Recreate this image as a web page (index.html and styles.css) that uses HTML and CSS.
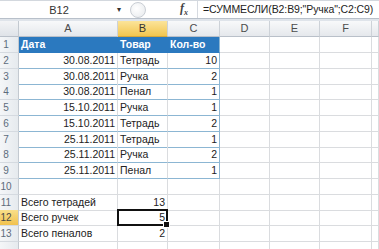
FILE: index.html
```html
<!DOCTYPE html>
<html>
<head>
   <meta http-equiv="Content-Type" content="text/html; charset=UTF-8" />
   <link rel="stylesheet" href="styles.css">
</head>
<body>

<div class="fbar">
    <div class="namebox">B12</div>
    <div class="drop">&#9662;</div>
    <div class="btnzone"><span class="round"></span></div>
    <div class="fx">f<sub>x</sub></div>
    <div class="formula">=СУММЕСЛИ(B2:B9;"Ручка";C2:C9)</div>
</div>
<div class="gap"></div>

<div class="sheet">
    <div class="row hdr">
        <div class="rh corner"></div>
        <div class="ch">A</div>
        <div class="ch sel">B</div>
        <div class="ch">C</div>
        <div class="ch">D</div>
        <div class="ch">E</div>
        <div class="ch">F</div>
        <div class="ch"></div>
    </div>

    <div class="row">
        <div class="rh">1</div>
        <div class="c th">Дата</div>
        <div class="c th">Товар</div>
        <div class="c th last">Кол-во</div>
        <div class="c"></div><div class="c"></div><div class="c"></div><div class="c"></div>
    </div>
    <div class="row">
        <div class="rh">2</div>
        <div class="c tb r">30.08.2011</div>
        <div class="c tb">Тетрадь</div>
        <div class="c tb r last">10</div>
        <div class="c"></div><div class="c"></div><div class="c"></div><div class="c"></div>
    </div>
    <div class="row">
        <div class="rh">3</div>
        <div class="c tb r">30.08.2011</div>
        <div class="c tb">Ручка</div>
        <div class="c tb r last">2</div>
        <div class="c"></div><div class="c"></div><div class="c"></div><div class="c"></div>
    </div>
    <div class="row">
        <div class="rh">4</div>
        <div class="c tb r">30.08.2011</div>
        <div class="c tb">Пенал</div>
        <div class="c tb r last">1</div>
        <div class="c"></div><div class="c"></div><div class="c"></div><div class="c"></div>
    </div>
    <div class="row">
        <div class="rh">5</div>
        <div class="c tb r">15.10.2011</div>
        <div class="c tb">Ручка</div>
        <div class="c tb r last">1</div>
        <div class="c"></div><div class="c"></div><div class="c"></div><div class="c"></div>
    </div>
    <div class="row">
        <div class="rh">6</div>
        <div class="c tb r">15.10.2011</div>
        <div class="c tb">Тетрадь</div>
        <div class="c tb r last">2</div>
        <div class="c"></div><div class="c"></div><div class="c"></div><div class="c"></div>
    </div>
    <div class="row">
        <div class="rh">7</div>
        <div class="c tb r">25.11.2011</div>
        <div class="c tb">Тетрадь</div>
        <div class="c tb r last">1</div>
        <div class="c"></div><div class="c"></div><div class="c"></div><div class="c"></div>
    </div>
    <div class="row">
        <div class="rh">8</div>
        <div class="c tb r">25.11.2011</div>
        <div class="c tb">Ручка</div>
        <div class="c tb r last">2</div>
        <div class="c"></div><div class="c"></div><div class="c"></div><div class="c"></div>
    </div>
    <div class="row">
        <div class="rh">9</div>
        <div class="c tb r">25.11.2011</div>
        <div class="c tb">Пенал</div>
        <div class="c tb r last">1</div>
        <div class="c"></div><div class="c"></div><div class="c"></div><div class="c"></div>
    </div>
    <div class="row">
        <div class="rh">10</div>
        <div class="c"></div><div class="c"></div><div class="c"></div>
        <div class="c"></div><div class="c"></div><div class="c"></div><div class="c"></div>
    </div>
    <div class="row">
        <div class="rh">11</div>
        <div class="c">Всего тетрадей</div>
        <div class="c r">13</div>
        <div class="c"></div>
        <div class="c"></div><div class="c"></div><div class="c"></div><div class="c"></div>
    </div>
    <div class="row">
        <div class="rh sel">12</div>
        <div class="c">Всего ручек</div>
        <div class="c r active">5</div>
        <div class="c"></div>
        <div class="c"></div><div class="c"></div><div class="c"></div><div class="c"></div>
    </div>
    <div class="row">
        <div class="rh">13</div>
        <div class="c">Всего пеналов</div>
        <div class="c r">2</div>
        <div class="c"></div>
        <div class="c"></div><div class="c"></div><div class="c"></div><div class="c"></div>
    </div>
    <div class="row">
        <div class="rh"></div>
        <div class="c"></div><div class="c"></div><div class="c"></div>
        <div class="c"></div><div class="c"></div><div class="c"></div><div class="c"></div>
    </div>
</div>

</body>
</html>
```

FILE: styles.css
```css
* {
    padding: 0; margin: 0;
    box-sizing: border-box;
}
body {
    width: 379px;
    height: 249px;
    overflow: hidden;
    background: #fff;
    font-family: "Liberation Sans", Arial, sans-serif;
    font-size: 10.5px;
    color: #222;
}

/* formula bar */
div.fbar {
    display: flex;
    height: 19px;
    border-top: 1px solid #d3d8de;
    border-bottom: 1px solid #b8c0ca;
    background: #fff;
    align-items: center;
}
div.namebox {
    width: 112px;
    text-align: center;
    font-size: 11px;
    color: #333;
    padding-left: 6px;
}
div.drop {
    width: 14px;
    font-size: 8px;
    color: #333;
    text-align: center;
}
div.btnzone {
    width: 52px;
    height: 100%;
    display: flex;
    align-items: center;
    padding-left: 4px;
}
span.round {
    width: 16px;
    height: 16px;
    border-radius: 50%;
    border: 1px solid #c9ced4;
    background: radial-gradient(circle at 40% 40%, #ffffff, #e6e9ec);
}
div.fx {
    width: 19px;
    font-family: "Liberation Serif", serif;
    font-style: italic;
    font-weight: bold;
    font-size: 12px;
    color: #444;
    padding-left: 2px;
}
div.fx sub {
    font-size: 8px;
}
div.formula {
    flex: 1;
    height: 100%;
    border-left: 1px solid #d6dae0;
    padding-left: 5px;
    line-height: 17px;
    font-size: 10.5px;
    letter-spacing: -0.1px;
    color: #222;
    white-space: nowrap;
}
div.gap {
    height: 2px;
    background: #dfe4ea;
}

/* grid */
div.row {
    display: grid;
    grid-template-columns: 19px 99px 50px 52px 50px 50px 52px 7px;
    height: 15.75px;
}
div.row.hdr {
    height: 16px;
}
div.rh {
    background: linear-gradient(to right, #f4f6f8, #e6eaee);
    border-right: 1px solid #c3c9d0;
    border-bottom: 1px solid #d5dae0;
    color: #5d6c7c;
    font-size: 10px;
    text-align: center;
    padding-right: 6px;
    line-height: 15px;
    white-space: nowrap;
}
div.rh.sel {
    background: linear-gradient(#f9df8a, #f1c24f);
    color: #4a4a4a;
}
div.rh.corner {
    background: linear-gradient(#f3f4f6, #dfe3e8);
    border-bottom: 1px solid #b9c0c9;
}
div.ch {
    background: linear-gradient(#f8f9fa, #e5e8ec);
    border-right: 1px solid #cdd2d8;
    border-bottom: 1px solid #b9c0c9;
    text-align: center;
    color: #4c4c4c;
    font-size: 11px;
    line-height: 15px;
}
div.ch.sel {
    background: linear-gradient(#fbe49a, #f3c64f);
    border-bottom-color: #d6a63a;
    color: #333;
}

div.c {
    border-right: 1px solid #dadcdf;
    border-bottom: 1px solid #dadcdf;
    padding: 0 2px;
    line-height: 15px;
    white-space: nowrap;
    overflow: visible;
}
div.c.r {
    text-align: right;
}
div.c.th {
    background: #2b79bf;
    color: #fff;
    font-weight: bold;
    border-right-color: #2b79bf;
    border-bottom-color: #2b79bf;
}
div.c.tb {
    border-bottom: 1px solid #8cb6d3;
}
div.c.last {
    border-right: 1px solid #8cb6d3;
}
div.c.active {
    position: relative;
}
div.c.active::after {
    content: "";
    position: absolute;
    left: -1px; top: -1px; right: -1px; bottom: -1px;
    border: 2px solid #111;
}
div.c.active::before {
    content: "";
    position: absolute;
    right: -3px; bottom: -3px;
    width: 5px; height: 5px;
    background: #111;
    border: 1px solid #fff;
    z-index: 1;
}
```
